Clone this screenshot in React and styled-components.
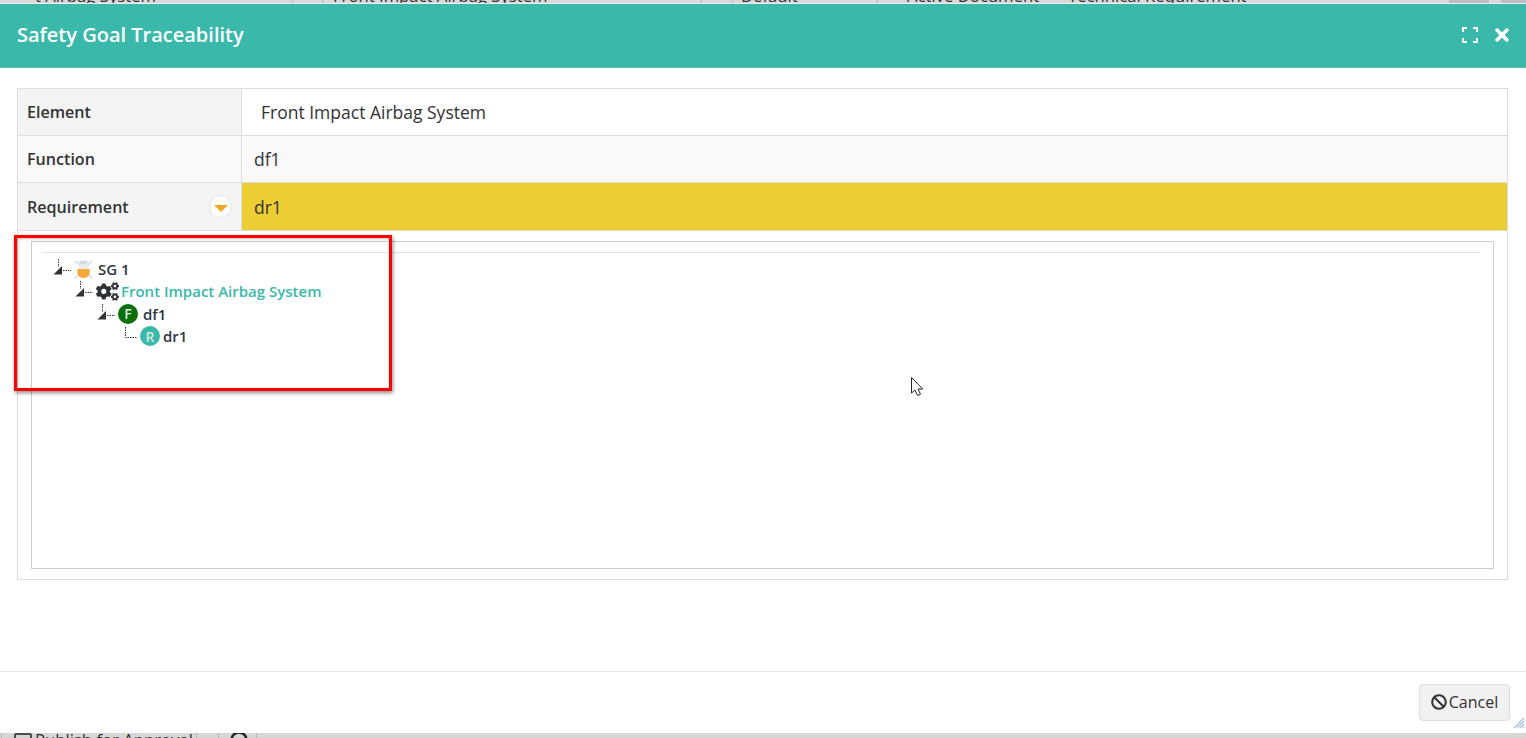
import styled, { createGlobalStyle } from "styled-components"
import { FaCogs, FaBan, FaTimes } from "react-icons/fa"

const Global = createGlobalStyle`
  html, body { margin: 0; padding: 0; background: #fff; }
  body { font-family: "Open Sans", "Liberation Sans", sans-serif; color: #333; }
  * { box-sizing: border-box; }
`

const Page = styled.div`
  position: relative;
  width: 1526px;
  height: 738px;
  display: flex;
  flex-direction: column;
  overflow: hidden;
`

const TopStrip = styled.div`
  height: 4px;
  flex: none;
  display: flex;
  overflow: hidden;
  background: #d9d9d9;
  border-bottom: 1px solid #eee;
`

const StripCell = styled.div`
  flex: none;
  width: ${(p) => p.$w}px;
  height: ${(p) => p.$h || 4}px;
  padding-left: ${(p) => p.$pad || 0}px;
  border-right: ${(p) => (p.$line ? "1px solid #b8b8b8" : "none")};
  background: ${(p) => p.$bg || "transparent"};
  font-size: 16.7px;
  line-height: 16px;
  white-space: nowrap;
  overflow: hidden;
  color: #333;
`

const StripText = styled.div`
  margin-top: -12px;
`

const Header = styled.header`
  height: 64px;
  flex: none;
  display: flex;
  align-items: center;
  justify-content: space-between;
  padding: 0 14px 1px 17px;
  background: #3ab9aa;
  border-bottom: 1px solid #5cc6b9;
  color: #fff;
`

const Title = styled.h1`
  margin: 0;
  font-size: 20px;
  font-weight: 600;
  line-height: 28px;
`

const HeaderTools = styled.div`
  display: flex;
  align-items: center;
  gap: 14px;
`

const Content = styled.main`
  flex: 1;
  padding: 20px 18px 0 17px;
`

const InfoTable = styled.div`
  display: grid;
  grid-template-columns: 224px 1fr;
  border: 1px solid #ddd;
  border-bottom: none;
`

const Label = styled.div`
  height: ${(p) => p.$h || 47}px;
  display: flex;
  align-items: center;
  justify-content: space-between;
  padding: 0 9px 0 9px;
  font-size: 16.1px;
  font-weight: 600;
  background: ${(p) => p.$bg};
  border-bottom: 1px solid #ddd;
  border-right: 1px solid #ddd;
`

const Value = styled.div`
  height: ${(p) => p.$h || 47}px;
  display: flex;
  align-items: center;
  padding-left: ${(p) => p.$pad}px;
  font-size: 17.5px;
  background: ${(p) => p.$bg};
  border-bottom: 1px solid #ddd;
`

const Toggle = styled.span`
  width: 23px;
  height: 23px;
  display: flex;
  align-items: center;
  justify-content: center;
  border-radius: 50%;
  background: #fff;
  border: 1px solid #e6e6e6;
  &::after {
    content: "";
    margin-top: 3px;
    border-left: 7px solid transparent;
    border-right: 7px solid transparent;
    border-top: 7px solid #f5a623;
  }
`

const TreePanel = styled.section`
  height: 349px;
  padding: 10px 13px;
  border: 1px solid #ddd;
  border-top: none;
`

const TreeBox = styled.div`
  height: 328px;
  padding: 10px 13px 0 12px;
  border: 1px solid #ccc;
`

const TreeRule = styled.hr`
  margin: 0;
  border: none;
  border-top: 1px solid #e2e2e6;
`

const Tree = styled.ul`
  list-style: none;
  margin: 0;
  padding: 4.5px 0 0 8px;
`

const Node = styled.li`
  height: 22.5px;
  display: flex;
  align-items: center;
  padding-left: ${(p) => p.$level * 22}px;
  font-size: 15px;
  font-weight: 600;
  color: ${(p) => (p.$active ? "#3ab9aa" : "#2f3542")};
  white-space: nowrap;
`

const NodeIcon = styled.span`
  flex: none;
  display: flex;
  align-items: center;
  justify-content: center;
  width: ${(p) => p.$w || 20}px;
  margin-right: ${(p) => p.$gap || 0}px;
  color: #2f3136;
`

const Badge = styled.span`
  width: 20px;
  height: 20px;
  display: flex;
  align-items: center;
  justify-content: center;
  border-radius: 50%;
  background: ${(p) => p.$bg};
  color: #d5ebe3;
  font-size: 14px;
  font-weight: 600;
`

const Footer = styled.footer`
  height: 62px;
  flex: none;
  display: flex;
  align-items: flex-start;
  justify-content: flex-end;
  padding: 12px 16px 0 0;
  border-top: 1px solid #e4e4e4;
`

const CancelButton = styled.button`
  width: 91px;
  height: 37px;
  display: flex;
  align-items: center;
  justify-content: center;
  gap: 2px;
  padding: 0 0 2px;
  font: 400 16px "Open Sans", sans-serif;
  color: #333;
  background: #f1f1f1;
  border: 1px solid #ddd;
  border-radius: 4px;
`

const BottomStrip = styled.div`
  height: 5px;
  flex: none;
  display: flex;
  overflow: hidden;
  background: #d6d6d6;
`

const BottomText = styled.div`
  display: flex;
  align-items: flex-start;
  gap: 3px;
  line-height: 20px;
  margin-top: -3px;
  white-space: nowrap;
  color: #333;
`

const Annotation = styled.div`
  position: absolute;
  left: 14px;
  top: 235px;
  width: 378px;
  height: 156px;
  border: 3px solid #fe0000;
  box-shadow: 1px 2px 4px rgba(0, 0, 0, 0.45), inset 1px 1px 3px rgba(0, 0, 0, 0.25);
  pointer-events: none;
`

const Cursor = styled.svg`
  position: absolute;
  left: 911px;
  top: 377px;
`

const Grip = styled.svg`
  position: absolute;
  left: 1513px;
  top: 717px;
`

const Elbow = ({ open }) => (
  <svg width="22" height="20" viewBox="0 0 22 20">
    <path
      d={open ? "M6.5 0v8M11 11.500h8" : "M7.5 1v10.500h11"}
      fill="none"
      stroke="#333"
      strokeDasharray="1.5 1"
    />
    {open && <path d="M1.500 15.500L10 15.500L10 7z" fill="#333" />}
  </svg>
)

const GoalIcon = () => (
  <svg width="20" height="20" viewBox="0 0 20 20">
    <path d="M1 2l6 5M18 2l-5 5M1 19l5-4M18 19l-4-4" stroke="#d8e2ea" strokeWidth="2" />
    <path d="M5 2h9l-1 3H6z" fill="#cfdae3" />
    <path d="M5.500 5h8v3c3 4 2 11-4 11S2.500 12 5.500 8z" fill="#e6ecf1" />
    <path d="M3.500 10h12c.8 4.500-.5 9-6 9s-6.800-4.500-6-9z" fill="#f6a93b" />
  </svg>
)

const ExpandIcon = () => (
  <svg width="16" height="16" viewBox="0 0 16 16">
    <path d="M1 5V1h4M11 1h4v4M15 11v4h-4M5 15H1v-4" fill="none" stroke="#fff" strokeWidth="2" />
  </svg>
)

function App() {
  return (
    <>
      <Global />
      <Page>
        <TopStrip>
          <StripCell $w={293} $pad={35} $line><StripText>t Airbag System</StripText></StripCell>
          <StripCell $w={30} $line />
          <StripCell $w={379} $pad={10} $line><StripText>Front Impact Airbag System</StripText></StripCell>
          <StripCell $w={31} $line />
          <StripCell $w={145} $pad={8} $line><StripText>Default</StripText></StripCell>
          <StripCell $w={190} $pad={29}><StripText>Active Document</StripText></StripCell>
          <StripCell $w={381}><StripText>Technical Requirement</StripText></StripCell>
          <StripCell $w={40} $bg="#bdbdbd" />
          <StripCell $w={12} />
          <StripCell $w={25} $bg="#bdbdbd" />
        </TopStrip>

        <Header>
          <Title>Safety Goal Traceability</Title>
          <HeaderTools>
            <ExpandIcon />
            <FaTimes size={20} />
          </HeaderTools>
        </Header>

        <Content>
          <InfoTable>
            <Label $bg="#f4f4f4">Element</Label>
            <Value $bg="#fff" $pad={19}>Front Impact Airbag System</Value>
            <Label $bg="#f9f9f9">Function</Label>
            <Value $bg="#f9f9f9" $pad={12}>df1</Value>
            <Label $bg="#f4f4f4" $h={48}>
              Requirement
              <Toggle />
            </Label>
            <Value $bg="#eccd33" $pad={12} $h={48}>dr1</Value>
          </InfoTable>
          <TreePanel>
            <TreeBox>
              <TreeRule />
              <Tree>
                <Node $level={0}>
                  <Elbow open />
                  <NodeIcon $gap={4}><GoalIcon /></NodeIcon>
                  SG 1
                </Node>
                <Node $level={1} $active>
                  <Elbow open />
                  <NodeIcon $w={23} $gap={2}><FaCogs size={23} /></NodeIcon>
                  Front Impact Airbag System
                </Node>
                <Node $level={2}>
                  <Elbow open />
                  <NodeIcon $gap={5}><Badge $bg="#0a6e0a">F</Badge></NodeIcon>
                  df1
                </Node>
                <Node $level={3}>
                  <Elbow />
                  <NodeIcon $gap={3}><Badge $bg="#3ab9aa">R</Badge></NodeIcon>
                  dr1
                </Node>
              </Tree>
            </TreeBox>
          </TreePanel>
        </Content>

        <Footer>
          <CancelButton>
            <FaBan size={16} />
            Cancel
          </CancelButton>
        </Footer>

        <BottomStrip>
          <StripCell $w={2} $h={5} $line />
          <StripCell $w={195} $h={5} $pad={12} $line>
            <BottomText>
              <svg width="18" height="20" viewBox="0 0 18 20">
                <rect x="1" y="4" width="16" height="14" rx="1" fill="none" stroke="#222" strokeWidth="1.500" />
              </svg>
              Publish for Approval
            </BottomText>
          </StripCell>
          <StripCell $w={22} $h={5} $line />
          <StripCell $w={38} $h={5} $pad={11} $line>
            <BottomText>
              <svg width="18" height="20" viewBox="0 0 18 20">
                <circle cx="9" cy="10" r="7.500" fill="none" stroke="#222" strokeWidth="2.500" />
              </svg>
            </BottomText>
          </StripCell>
        </BottomStrip>

        <Annotation />
        <Cursor width="14" height="22" viewBox="0 0 14 22">
          <path
            d="M.5.500v15.500l3.500-3 2.500 5.500 3-1.300-2.500-5.200h4.700z"
            fill="#fff"
            stroke="#222"
            strokeWidth="1"
          />
        </Cursor>
        <Grip width="12" height="12" viewBox="0 0 12 12">
          <path d="M1 11L11 1M4 11l7-7M7 11l4-4M10 11l1-1" stroke="#a5c3e0" strokeWidth="1.200" />
        </Grip>
      </Page>
    </>
  )
}

export default App
